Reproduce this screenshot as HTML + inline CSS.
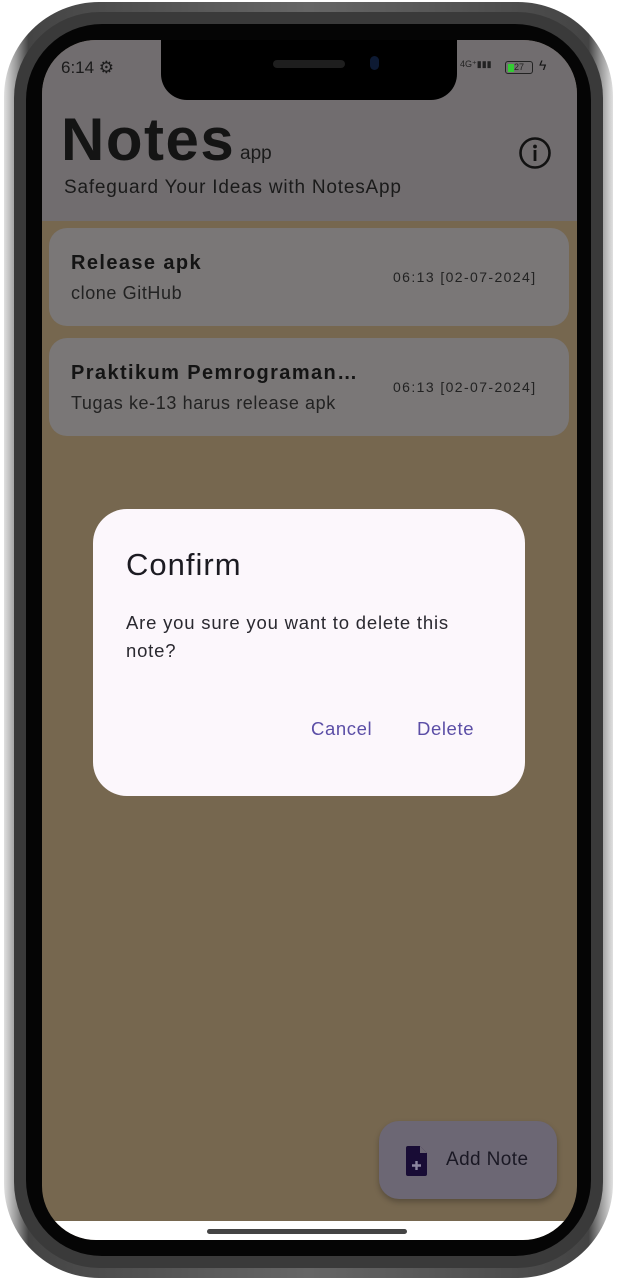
<!DOCTYPE html>
<html><head><meta charset="utf-8"><style>
*{margin:0;padding:0;box-sizing:border-box}
body{width:617px;height:1280px;background:#fff;position:relative;overflow:hidden;font-family:"Liberation Sans",sans-serif}
.outer{position:absolute;left:4px;top:2px;width:609px;height:1276px;border-radius:95px;background:linear-gradient(90deg,#e0e0e0,#999 2%,#444 4%,#666 50%,#444 96%,#999 98%,#e0e0e0);}
.mid{position:absolute;left:14px;top:12px;width:589px;height:1256px;border-radius:86px;background:#3a3a3a}
.bez{position:absolute;left:26px;top:24px;width:565px;height:1232px;border-radius:76px;background:#050505}
.screen{position:absolute;left:42px;top:40px;width:535px;height:1200px;border-radius:54px;overflow:hidden;background:#76674f}
.hdr{position:absolute;left:0;top:0;width:535px;height:181px;background:#716d6f}
.notch{position:absolute;left:119px;top:-5px;width:296px;height:65px;background:#000;border-radius:0 0 26px 26px}
.spk{position:absolute;left:231px;top:20px;width:72px;height:8px;border-radius:4px;background:#1e1e1e}
.cam{position:absolute;left:328px;top:16px;width:9px;height:14px;border-radius:5px;background:#0d1a33}
.card{position:absolute;left:7px;width:520px;height:98px;border-radius:18px;background:#7a7777}
.t{position:absolute;color:#141414;white-space:nowrap}
.white{position:absolute;left:0;top:1181px;width:535px;height:30px;background:#fff}
.bar{position:absolute;left:165px;top:1189px;width:200px;height:5px;border-radius:3px;background:#444}
.dlg{position:absolute;left:93px;top:509px;width:432px;height:287px;border-radius:34px;background:#fcf7fc}
.fab{position:absolute;left:379px;top:1121px;width:178px;height:78px;border-radius:20px;background:#6c6774;box-shadow:0 3px 6px rgba(0,0,0,.25)}
</style></head><body>
<div class="outer"></div><div class="mid"></div><div class="bez"></div>
<div class="screen">
 <div class="hdr"></div>
 <div class="t" style="left:19px;top:18px;font-size:17px;color:#1a1a1a">6:14 ⚙</div>
 <div class="t" style="left:418px;top:19px;font-size:9px;color:#222">4G⁺▮▮▮</div>
 <div style="position:absolute;left:463px;top:21px;width:28px;height:13px;border:1.5px solid #222;border-radius:3px;font-size:9px;line-height:10px;color:#222;padding-left:2px"><span style="display:inline-block;width:6px;height:8px;background:#3c3;vertical-align:middle"></span>27</div>
 <div class="t" style="left:497px;top:17px;font-size:14px">ϟ</div>
 <div class="t" style="left:19px;top:68px;font-size:60px;font-weight:bold;letter-spacing:1.5px;line-height:64px">Notes</div>
 <div class="t" style="left:198px;top:103px;font-size:19px;color:#1a1a1a">app</div>
 <div class="t" style="left:22px;top:137px;font-size:19px;color:#1a1a1a;letter-spacing:.8px">Safeguard Your Ideas with NotesApp</div>
 <svg style="position:absolute;left:476px;top:96px" width="34" height="34" viewBox="0 0 34 34"><circle cx="17" cy="17" r="14.5" fill="none" stroke="#111" stroke-width="2.6"/><circle cx="17" cy="10.5" r="1.9" fill="#111"/><rect x="15.6" y="14" width="2.8" height="11" fill="#111"/></svg>
 <div class="card" style="top:188px"></div>
 <div class="t" style="left:29px;top:212px;font-size:20px;font-weight:bold;letter-spacing:1.4px">Release apk</div>
 <div class="t" style="left:29px;top:243px;font-size:18px;color:#222;letter-spacing:.6px">clone GitHub</div>
 <div class="t" style="left:351px;top:229px;font-size:14px;color:#222;letter-spacing:1.4px">06:13 [02-07-2024]</div>
 <div class="card" style="top:298px"></div>
 <div class="t" style="left:29px;top:322px;font-size:20px;font-weight:bold;letter-spacing:1.4px">Praktikum Pemrograman…</div>
 <div class="t" style="left:29px;top:353px;font-size:18px;color:#222;letter-spacing:.6px">Tugas ke-13 harus release apk</div>
 <div class="t" style="left:351px;top:339px;font-size:14px;color:#222;letter-spacing:1.4px">06:13 [02-07-2024]</div>
 <div class="notch"></div><div class="spk"></div><div class="cam"></div>
 <div class="white"></div><div class="bar"></div>
</div>
<div class="dlg">
 <div class="t" style="left:33px;top:38px;font-size:31px;color:#1c1b22;letter-spacing:1px">Confirm</div>
 <div class="t" style="left:33px;top:100px;font-size:18.5px;line-height:28px;color:#2a2930;width:350px;white-space:normal;letter-spacing:.8px">Are you sure you want to delete this note?</div>
 <div class="t" style="left:218px;top:209px;font-size:18.5px;color:#5b4ea6;letter-spacing:.6px">Cancel</div>
 <div class="t" style="left:324px;top:209px;font-size:18.5px;color:#5b4ea6;letter-spacing:.6px">Delete</div>
</div>
<div class="fab">
 <svg style="position:absolute;left:26px;top:25px" width="24" height="30" viewBox="0 0 24 30"><path d="M3 0H15L22 7V28A2 2 0 0 1 20 30H3A2 2 0 0 1 1 28V2A2 2 0 0 1 3 0Z" fill="#180c35"/><path d="M15 0V7H22" fill="#6c6774"/><path d="M11.5 15v9M7 19.5h9" stroke="#8c86a0" stroke-width="2.4"/></svg>
 <div class="t" style="left:67px;top:28px;font-size:19px;color:#1a1824;letter-spacing:.4px">Add Note</div>
</div>
</body></html>
